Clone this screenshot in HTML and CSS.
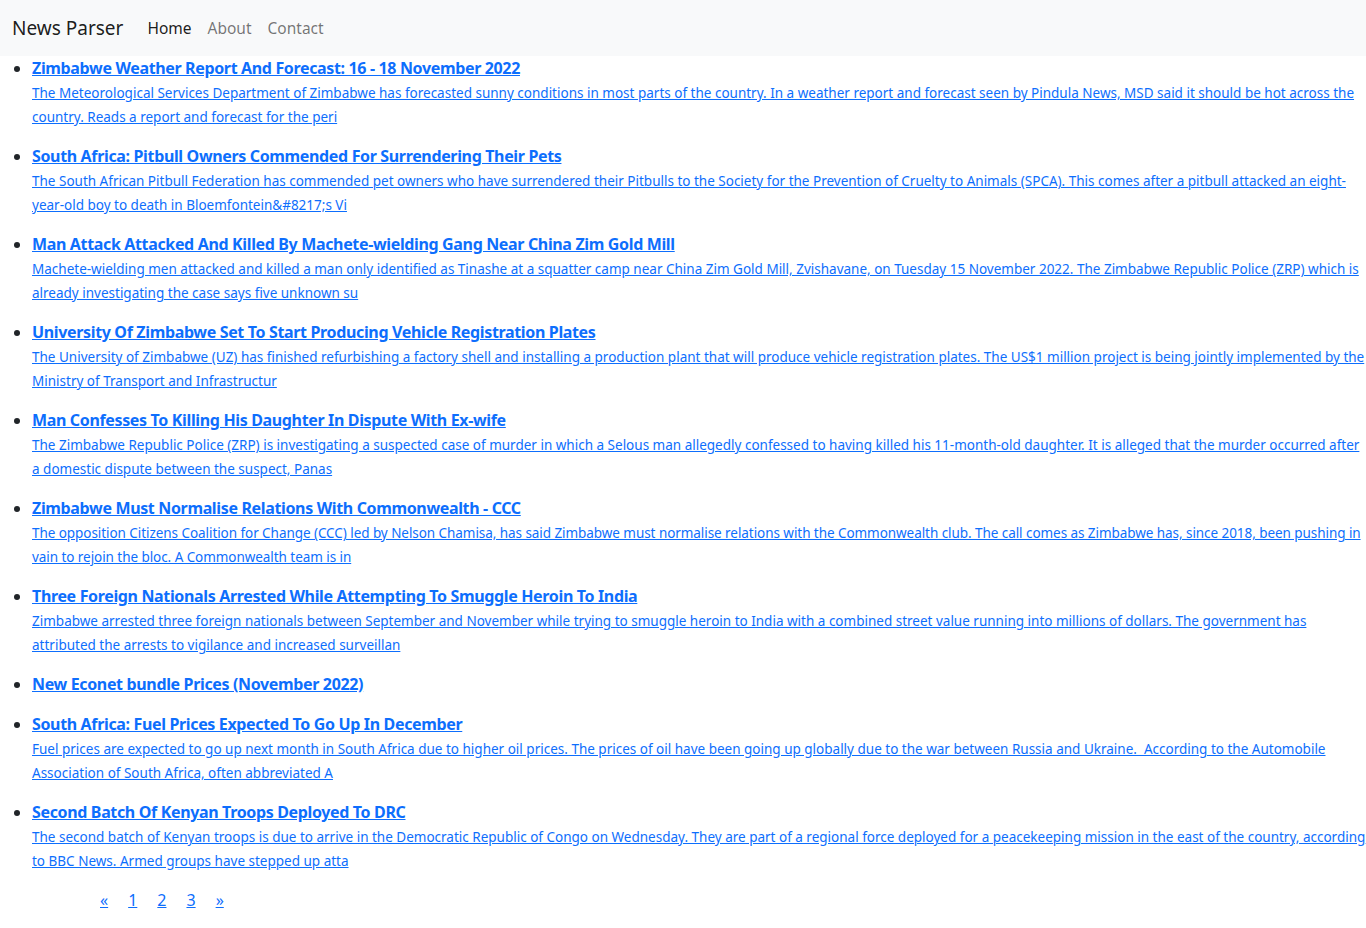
FILE: index.html
```html
<!DOCTYPE html>
<html lang="en">
<head>
<meta charset="utf-8">
<title>News Parser</title>
<link rel="stylesheet" href="styles.css">
</head>
<body>
<nav class="navbar">
  <a class="brand" href="#">News Parser</a>
  <ul class="nav">
    <li><a class="nav-link active" href="#">Home</a></li>
    <li><a class="nav-link" href="#">About</a></li>
    <li><a class="nav-link" href="#">Contact</a></li>
  </ul>
</nav>
<ul class="news">
  <li><a class="title" href="#">Zimbabwe Weather Report And Forecast: 16 - 18 November 2022</a><br><a class="desc" href="#">The Meteorological Services Department of Zimbabwe has forecasted sunny conditions in most parts of the country. In a weather report and forecast seen by Pindula News, MSD said it should be hot across the country. Reads a report and forecast for the peri</a></li>
  <li><a class="title" href="#">South Africa: Pitbull Owners Commended For Surrendering Their Pets</a><br><a class="desc" href="#">The South African Pitbull Federation has commended pet owners who have surrendered their Pitbulls to the Society for the Prevention of Cruelty to Animals (SPCA). This comes after a pitbull attacked an eight-year-old boy to death in Bloemfontein&amp;#8217;s Vi</a></li>
  <li><a class="title" href="#">Man Attack Attacked And Killed By Machete-wielding Gang Near China Zim Gold Mill</a><br><a class="desc" href="#">Machete-wielding men attacked and killed a man only identified as Tinashe at a squatter camp near China Zim Gold Mill, Zvishavane, on Tuesday 15 November 2022. The Zimbabwe Republic Police (ZRP) which is already investigating the case says five unknown su</a></li>
  <li><a class="title" href="#">University Of Zimbabwe Set To Start Producing Vehicle Registration Plates</a><br><a class="desc" href="#">The University of Zimbabwe (UZ) has finished refurbishing a factory shell and installing a production plant that will produce vehicle registration plates. The US$1 million project is being jointly implemented by the Ministry of Transport and Infrastructur</a></li>
  <li><a class="title" href="#">Man Confesses To Killing His Daughter In Dispute With Ex-wife</a><br><a class="desc" href="#">The Zimbabwe Republic Police (ZRP) is investigating a suspected case of murder in which a Selous man allegedly confessed to having killed his 11-month-old daughter. It is alleged that the murder occurred after a domestic dispute between the suspect, Panas</a></li>
  <li><a class="title" href="#">Zimbabwe Must Normalise Relations With Commonwealth - CCC</a><br><a class="desc tight" href="#">The opposition Citizens Coalition for Change (CCC) led by Nelson Chamisa, has said Zimbabwe must normalise relations with the Commonwealth club. The call comes as Zimbabwe has, since 2018, been pushing in vain to rejoin the bloc. A Commonwealth team is in</a></li>
  <li><a class="title" href="#">Three Foreign Nationals Arrested While Attempting To Smuggle Heroin To India</a><br><a class="desc" href="#">Zimbabwe arrested three foreign nationals between September and November while trying to smuggle heroin to India with a combined street value running into millions of dollars. The government has attributed the arrests to vigilance and increased surveillan</a></li>
  <li><a class="title" href="#">New Econet bundle Prices (November 2022)</a></li>
  <li><a class="title" href="#">South Africa: Fuel Prices Expected To Go Up In December</a><br><a class="desc" href="#">Fuel prices are expected to go up next month in South Africa due to higher oil prices. The prices of oil have been going up globally due to the war between Russia and Ukraine.&nbsp; According to the Automobile Association of South Africa, often abbreviated A</a></li>
  <li><a class="title" href="#">Second Batch Of Kenyan Troops Deployed To DRC</a><br><a class="desc" href="#">The second batch of Kenyan troops is due to arrive in the Democratic Republic of Congo on Wednesday. They are part of a regional force deployed for a peacekeeping mission in the east of the country, according to BBC News. Armed groups have stepped up atta</a></li>
</ul>
<nav class="pager">
  <a href="#">&laquo;</a>
  <a href="#">1</a>
  <a href="#">2</a>
  <a href="#">3</a>
  <a href="#">&raquo;</a>
</nav>
</body>
</html>
```
FILE: styles.css
```css
body {
  margin: 0;
  font-family: "Noto Sans", "Open Sans", sans-serif;
  font-size: 16px;
  line-height: 24px;
  color: #212529;
  background: #fff;
}
a { color: #0d6efd; }
.navbar {
  display: flex;
  align-items: center;
  height: 56px;
  padding: 0 12px;
  background: #f8f9fa;
}
.brand {
  font-size: 19px;
  color: rgba(0,0,0,.9);
  text-decoration: none;
  margin-right: 16px;
}
.nav {
  display: flex;
  list-style: none;
  margin: 0;
  padding: 0;
}
.nav-link {
  display: block;
  padding: 8px;
  color: rgba(0,0,0,.55);
  text-decoration: none;
  font-size: 15.5px;
}
.nav-link.active { color: rgba(0,0,0,.9); }
.news {
  margin: 0;
  padding-left: 32px;
}
.news li { margin-bottom: 16px; }
.title {
  font-weight: bold;
  font-size: 16px;
  letter-spacing: -0.35px;
  vertical-align: top;
}
.desc {
  font-size: 13.5px;
  letter-spacing: 0;
  vertical-align: top;
  position: relative;
  top: 1px;
}
.desc.tight { letter-spacing: -0.06px; }
.pager {
  display: flex;
  padding-left: 100px;
  gap: 20px;
}
```
